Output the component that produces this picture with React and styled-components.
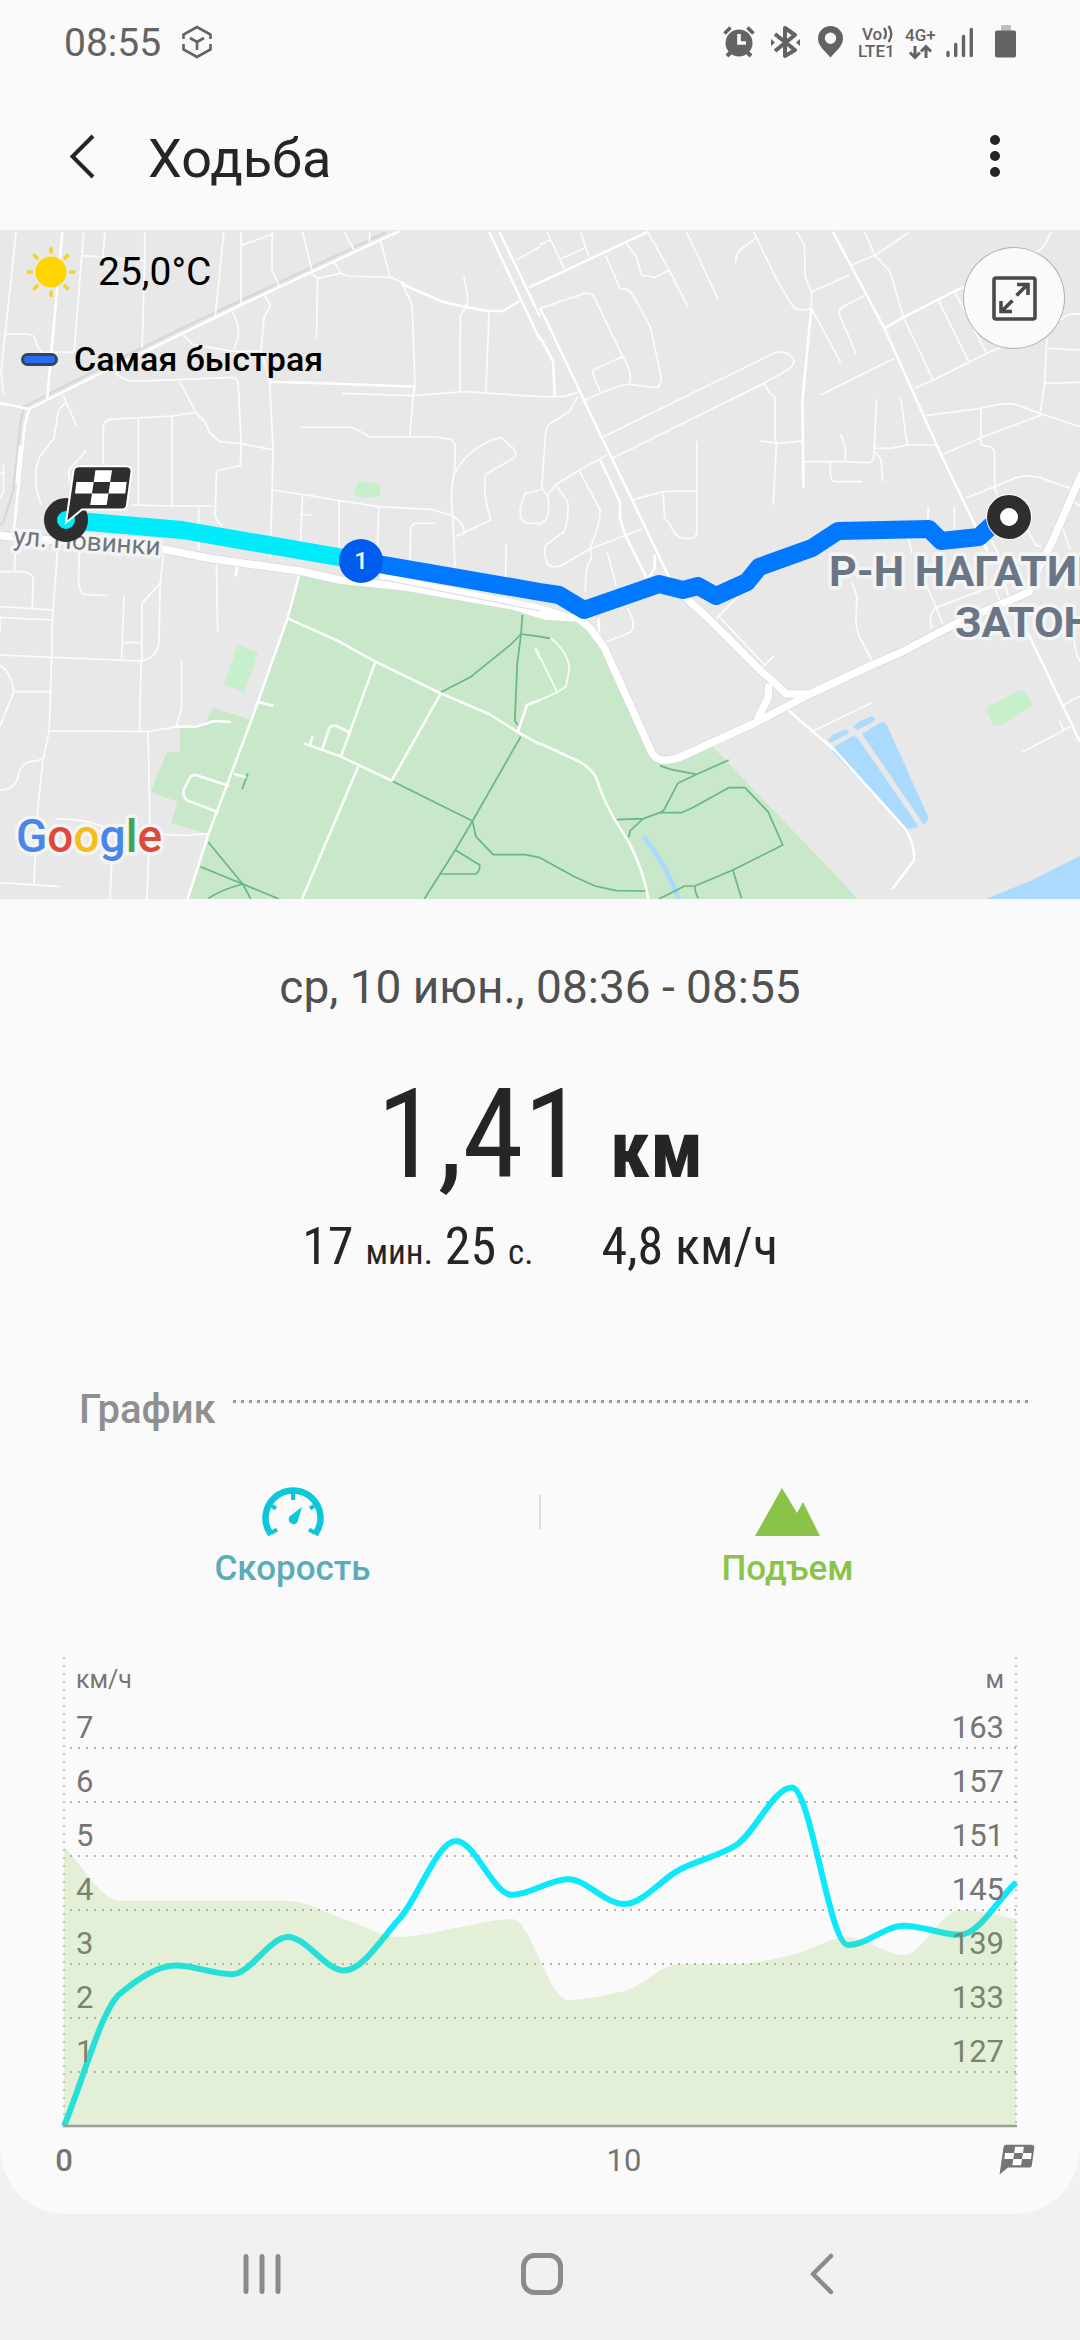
import React, { useState } from 'react';
import styled, { createGlobalStyle } from 'styled-components';

const GlobalStyle = createGlobalStyle`
    body {
        margin: 0;
        background-color: #f1f1f1;
        font-family: Roboto, "Noto Sans", sans-serif;
    }

    button {
        padding: 0;
        border: 0;
        background: none;
        font: inherit;
        color: inherit;
        cursor: pointer;
    }

    svg {
        display: block;
    }
`;

const Screen = styled.main`
    overflow: hidden;
    background-color: #fafafa;
    border-radius: 0 0 66px 66px;
`;

/* status bar */
const StatusBar = styled.div`
    display: flex;
    justify-content: space-between;
    align-items: center;
    height: 86px;
    padding: 0 64px;
    color: #636363;
`;

const StatusGroup = styled.div`
    display: flex;
    align-items: center;
    gap: ${props => props.$gap};
`;

const Clock = styled.time`
    font-size: 39px;
`;

/* title bar */
const StyledHeader = styled.header`
    display: flex;
    align-items: center;
    height: 144px;
    padding: 0 56px 0 50px;
    color: #252525;
`;

const IconButton = styled.button`
    display: flex;
    justify-content: center;
    align-items: center;
    width: 64px;
    height: 96px;
`;

const Title = styled.h1`
    flex: 1;
    margin: 0;
    padding-left: 34px;
    font-size: 54px;
    font-weight: 400;
`;

/* map */
const MapBox = styled.section`
    position: relative;
    overflow: hidden;
    height: 669px;
    background-color: #e8e8e8;
`;

const MapSvg = styled.svg`
    width: 100%;
    height: 100%;
`;

const MapInfo = styled.div`
    position: absolute;
    left: 21px;
    top: 12px;
    display: flex;
    flex-direction: column;
    gap: 37px;
    color: #000;
`;

const Weather = styled.div`
    display: flex;
    align-items: center;
    gap: 20px;
    padding-left: 3px;
    font-size: 39px;
    line-height: 60px;
`;

const Legend = styled.div`
    display: flex;
    align-items: center;
    gap: 16px;
    font-size: 34px;
    font-weight: 500;
    line-height: 40px;
`;

const LegendMark = styled.span`
    box-sizing: border-box;
    width: 37px;
    height: 13px;
    border: 3px solid #374459;
    border-radius: 7px;
    background-color: #2a6df5;
`;

const ExpandButton = styled.button`
    position: absolute;
    right: 16px;
    top: 18px;
    display: flex;
    justify-content: center;
    align-items: center;
    width: 100px;
    height: 100px;
    border-radius: 50%;
    background-color: #fafafa;
    box-shadow: 0 0 0 1px #b0b0b0;
`;

/* summary */
const Summary = styled.section`
    display: flex;
    flex-direction: column;
    align-items: center;
    padding-top: 60px;
    color: #252525;
`;

const DateText = styled.p`
    margin: 0;
    font-size: 46px;
    line-height: 56px;
    color: #505050;
`;

const Distance = styled.p`
    display: flex;
    align-items: baseline;
    gap: 25px;
    margin: 50px 0 0;
    font-family: "Roboto Condensed", Roboto, sans-serif;
    font-size: 124px;
    line-height: 140px;
`;

const DistanceUnit = styled.span`
    font-size: 80px;
    font-weight: 700;
    line-height: 1;
`;

const Metrics = styled.div`
    display: flex;
    gap: 68px;
    margin-top: 10px;
    font-family: "Roboto Condensed", Roboto, sans-serif;
    font-size: 52px;
    line-height: 64px;
`;

const SmallUnit = styled.small`
    font-size: 35px;
    line-height: 1;
`;

/* graph */
const GraphHeading = styled.div`
    display: flex;
    gap: 17px;
    margin-top: 107px;
    padding: 0 48px 0 79px;
`;

const GraphTitle = styled.h2`
    margin: 0;
    font-size: 40px;
    font-weight: 500;
    line-height: 48px;
    color: #8f8f8f;
`;

const DottedLine = styled.span`
    flex: 1;
    height: 3px;
    margin-top: 14px;
    background: repeating-linear-gradient(to right, #9a9a9a 0 3px, transparent 3px 8px);
`;

const Tabs = styled.div`
    display: flex;
    align-items: flex-start;
    margin-top: 53px;
    padding: 0 46px;
`;

const TabButton = styled.button`
    flex: 1;
    display: flex;
    flex-direction: column;
    align-items: center;
    gap: 12px;
    font-size: 35px;
    font-weight: 500;
    line-height: 40px;
    color: ${props => props.$color};
    opacity: ${props => (props.$on ? 1 : 0.4)};
`;

const TabDivider = styled.span`
    width: 2px;
    height: 34px;
    margin-top: 8px;
    background-color: #dedede;
`;

const ChartSvg = styled.svg`
    width: 100%;
    height: auto;
    margin: 61px 0 24px;
`;

/* system navigation */
const NavBar = styled.nav`
    display: grid;
    grid-template-columns: repeat(3, 26%);
    justify-content: center;
    height: 126px;
    padding: 0 0 0 4px;
    color: #8b8b8b;
`;

const NavButton = styled.button`
    display: flex;
    justify-content: center;
    align-items: center;
    height: 120px;
`;

const StatusIcons = () => (
    <StatusGroup $gap="8px">
        <svg width="40" height="36" viewBox="0 0 40 36" fill="currentColor">
            <circle cx="16" cy="18" r="13.5" />
            <path d="M1.5 8.5L7.500 2.500M30.500 8.500L24.500 2.500" stroke="currentColor" strokeWidth="3.600" />
            <path d="M4 31L8 27M28 31L24 27" stroke="currentColor" strokeWidth="4" />
            <path d="M16 9V18H23" stroke="#fafafa" strokeWidth="3.600" fill="none" />
        </svg>
        <svg width="39" height="36" viewBox="0 0 39 36" fill="none" stroke="currentColor" strokeWidth="4">
            <path d="M4 9L24 25L14 31V3L24 10L4 26" strokeLinejoin="round" />
            <path d="M0 14L4 17.500L0 21ZM29 14L25 17.500L29 21Z" fill="currentColor" stroke="none" />
        </svg>
        <svg width="32" height="36" viewBox="0 0 32 36" fill="currentColor">
            <path fillRule="evenodd" d="M12.500 1C5.500 1 0 6.500 0 13.500C0 21 7 26 12.500 32.500C18 26 25 21 25 13.500C25 6.500 19.500 1 12.500 1ZM12.500 7.500A5.700 5.700 0 1 1 12.500 18.900A5.700 5.700 0 1 1 12.500 7.500Z" />
        </svg>
        <svg width="39" height="36" viewBox="0 0 39 36" fill="currentColor" fontSize="17" fontWeight="500">
            <text x="4" y="15">Vo</text>
            <path d="M26 3Q30 8.500 26 14M30.500 1Q36 8.500 30.500 17" fill="none" stroke="currentColor" strokeWidth="2.400" />
            <text x="0" y="32">LTE1</text>
        </svg>
        <svg width="33" height="36" viewBox="0 0 33 36" fill="currentColor" fontSize="17" fontWeight="500">
            <text x="0" y="16">4G+</text>
            <path d="M10 21V32M5 27.500L10 32.500L15 27.500M21 33V22M16 26.500L21 21.500L26 26.500" fill="none" stroke="currentColor" strokeWidth="3" />
        </svg>
        <svg width="41" height="36" viewBox="0 0 41 36" stroke="currentColor" strokeWidth="3.400" strokeLinecap="round">
            <path d="M2 27.500V30.500M9.700 19.500V30.500M17.500 11.500V30.500M25.300 4.500V30.500" />
        </svg>
        <svg width="21" height="36" viewBox="0 0 21 36" fill="currentColor">
            <rect x="6" y="0" width="10" height="7" rx="1" opacity=".4" />
            <rect y="5.500" width="21" height="27" rx="2" />
        </svg>
    </StatusGroup>
);

// Each quarter of the map has its own grid of 1568 units across, 3 units to a pixel down
const TILE_NW = 'translate(0 -5) scale(.34439 .33333)';
const TILE_NE = 'translate(540 -5) scale(.34439 .33333)';
const TILE_SW = 'translate(0 330) scale(.34439 .33333)';
const TILE_SE = 'translate(540 330) scale(.34439 .33333)';

const STREETS = [
    [TILE_NW, `M47 20L3 440L10 505M15 327H80Q100 330 103 345Q110 378 125 382H215M243 20L215 382M240 92L420 107
        M305 20L298 95M420 20V100L413 370M650 20L625 275M700 20V240M700 62L795 25M790 20V135L810 182M878 20L907 140
        M1000 22L1028 75M1073 20V52M1105 50L1133 157M905 145L922 160L990 145L970 110
        M990 145L1010 153L1133 157L1165 170L1195 235L1198 270L1205 485L1200 510L1190 632M922 160L919 340
        M1347 155L1358 218L1355 245L1337 270L1335 500M1420 262L1411 500M1500 105L1568 65
        M768 210L785 243L767 275L758 375L783 470M675 262Q700 310 690 340L680 372M533 330L560 358L680 380L760 378
        M335 440Q345 460 380 468L440 467L675 457Q692 460 692 480L700 655L698 722L640 735Q628 737 628 750L625 870Q628 890 645 902
        M522 470L570 565L595 590L608 622L638 650L700 656L790 674M570 562L500 573L320 583Q300 588 300 606V715
        M402 578V840M500 573V842M380 840L500 843H620M577 843V975M783 470L793 670L790 800L785 1000
        M993 505L1198 512L1350 500L1568 515M872 607H1022L1075 636L1265 636L1310 643L1322 660L1320 740Q1305 800 1315 880L1322 1050
        M1455 637L1490 670Q1505 690 1490 700L1410 748Q1400 800 1425 885L1350 922L1322 935M1455 637Q1400 650 1360 690Q1330 720 1322 745
        M790 795L900 812L985 827L1100 845L1250 853L1315 872L1340 895L1350 922M878 812L872 970M872 868L905 870
        M985 827V970M1100 845L1095 990M1265 895H1205Q1192 900 1192 920L1190 1050M1470 955L1467 1130
        M1568 795L1525 805L1510 850L1512 880L1530 895H1568M183 510L222 602M190 533L170 555L157 640L115 695Q90 760 120 840
        M250 677L200 735V770M10 715V800L0 820M0 745H15M45 975L42 1040`],
    [TILE_NE, `M20 20L70 130M118 20L143 97M58 103L132 68M0 60L30 45
        M190 90L232 190Q260 190 270 210L320 305L352 455Q350 490 335 488L260 478Q240 475 130 525
        M0 250L130 205Q150 203 157 215L240 395Q270 440 260 478M240 395L158 433Q150 440 155 450L175 500
        M250 55L280 95L295 150L335 157L375 135M315 25L375 135L430 247M425 20L517 222
        M620 20L690 170L735 245Q750 262 788 250M625 42L580 75Q568 90 568 115M745 20L768 60L770 155L788 200V250
        M788 200L900 150M788 250L873 412M940 212L875 248Q865 258 870 270L918 387M815 510L1030 400
        M900 122L975 90L1070 22M942 20L972 90L1017 140L1055 277L1142 465M1155 222L1245 410M1203 198L1297 385
        M1088 490L1142 465L1297 385L1335 368M1485 20Q1460 80 1440 80M1510 285Q1540 260 1568 268
        M1472 340L1465 475L1453 560M1475 370L1568 375M1465 475L1568 472
        M1120 572L1280 550Q1350 530 1380 538L1460 568L1568 605M1460 568L1280 638L1165 690
        M1280 550V655Q1283 665 1300 663Q1318 670 1320 680V790L1330 810M1235 820L1320 785L1385 757Q1410 750 1450 757L1540 790
        M178 638L685 382Q715 375 735 400Q745 420 710 440L650 475L210 700
        M650 475L668 505L682 515V635L687 655L677 840M640 648L687 655L762 648M765 710H880L955 713Q968 710 970 690L977 522
        M873 627L887 668V710M970 670L1020 670L1068 660L1150 660M1048 520L1062 630L1068 660M975 680L990 705L995 770
        M843 713V750Q845 770 860 770H935M455 648V920Q455 940 435 940H415Q395 935 385 915Q375 890 362 880L358 800L455 797
        M358 800L262 827M0 515L70 515L110 502M110 515L85 560L30 595Q15 610 15 640L5 790L20 810
        M195 690L115 735L45 780L22 810Q30 850 20 880L0 900
        M50 785L80 830Q85 880 70 920L15 962Q10 1000 25 1020Q40 1030 60 1022L145 972L295 912
        M115 740L175 855Q175 900 145 970L150 1000Q130 1020 132 1100M195 980L222 1085
        M1127 845V885M1203 845V910M1070 940L1080 985M1415 915L1440 960L1455 965M1545 825L1568 845M1518 910L1540 975M1310 945L1330 985`],
    [TILE_SW, `M0 35H70Q95 40 97 60L93 147M0 140L155 150M0 172L155 180M0 172V215M0 285L150 292L410 303
        M168 -40L152 180L150 292L143 512L125 598L110 740L98 975M0 968L175 980M0 315Q35 340 40 395L0 500M40 395H148
        M143 512L430 515L512 500L527 445V302M125 598L80 607Q55 620 50 660Q35 690 0 690
        M230 -30L228 70Q232 100 247 103L312 107M360 108L353 298M353 248H412M475 -20L465 70L412 130V303
        M412 303Q460 290 462 240L465 70M410 303L405 515M430 515L435 780L427 1017M628 -10L632 215
        M325 880L320 1017M160 777Q240 775 300 800M470 823L545 826L605 821`],
    [TILE_SE, `M255 145L270 180V205L262 217L190 247M575 110L500 188M520 170L650 312M680 287L640 328
        M785 515L795 512L963 428M905 65L920 110L917 190L925 225L963 300M1145 145L1310 80M1170 190L1120 70
        M1145 145Q1125 180 1140 205M1520 435L1568 408M1400 577L1540 500M1508 483L1522 512M1550 220Q1550 270 1568 305
        M1340 30L1360 110M1310 60L1335 120M0 290L50 397M30 233Q85 280 85 330L75 380L50 397L0 420`],
];

const AVENUES = [
    [TILE_NW, `M1165 170L1180 183L1290 232L1350 245L1415 258L1460 258L1508 228M1535 187L1568 172
        M783 470L940 475L1205 485M181 20L137 520M58 660L48 775M0 535Q40 540 80 552M1420 20L1568 345M1450 20L1568 275
        M1160 18L700 240L410 385L220 482L85 552L72 600L40 920`],
    [TILE_NE, `M315 20L0 172M0 250L20 290L180 640L270 830L385 1080M0 335L38 410L43 515M850 20L1000 310L1165 690L1300 980
        M788 250L762 525L765 788M1000 310L1055 277L1205 198L1240 182M175 705L232 830V880L250 935L310 1060M333 990V1030L315 1060`],
    [TILE_SW, `M870 40L835 175L730 480L605 823L545 1017M665 678L568 645Q555 645 550 655L533 690Q530 710 545 722L635 757
        M752 427L795 437M680 642L715 652M835 175L980 242L1090 305L1280 400L1420 462L1505 517L1568 553M1090 305L990 590
        M883 550L990 590L1137 662L1280 400M900 555L908 528M935 570L957 503Q965 495 975 497L1015 517M1040 620L877 1017
        M1503 517L1530 435L1568 420M1555 265L1568 295M512 500H570L622 483L670 486M690 5L685 50`],
    [TILE_SE, `M0 550L100 598Q140 615 162 650Q180 710 212 770L260 850Q300 930 315 1017M170 175L172 230
        M720 450L855 570L1060 805Q1088 850 1087 900L1023 987M1410 205L1568 545`],
];

const FOOTPATHS = [
    [TILE_SW, `M1517 165L1513 222L1568 230M1513 222L1485 252L1365 352L1280 397M1513 222L1502 310L1495 482L1503 495
        M1512 530L1372 783L1137 662M1372 783L1322 870L1232 1017M1372 783L1382 830L1432 884H1525L1568 893
        M1322 870L1393 915Q1395 930 1382 942H1278M605 847L705 972L582 920M705 972L810 1017M605 1015Q640 990 705 972L728 1017
        M720 640L703 688`],
    [TILE_SE, `M0 230L30 235M348 617L380 628L455 643L400 670L360 750L348 758M455 643L548 600
        M222 779L300 776L348 758H410L440 745L548 683H595L662 755L705 855L560 930L450 978H420L345 1017
        M300 776L262 812L257 832M560 930L585 1015M450 978Q450 1000 460 1015M0 893L100 950L160 978L222 992L310 993`],
];

const HIGHWAY = `M-5 305L13 307L162 319L213 329L300 341L340 350L406 357L513 376L545 386L578 388L590 398L604 417L652 523
    Q656 529 662 530Q668 531 678 528L755 493L812 463L872 435L902 422L953 395L1029 362L1039 337L1053 310L1082 243`;
const JUNCTION = 'M684 366L712 392L760 440L777 455L786 464H812M769 454L768 468L757 490';

const Roads = ({ tiles, color, width }) => (
    <g fill="none" stroke={color} strokeWidth={width} strokeLinejoin="round">
        {tiles.map(([tile, d]) => (
            <g key={tile} transform={tile}>
                <path d={d} vectorEffect="non-scaling-stroke" />
            </g>
        ))}
    </g>
);

/* 체크무늬 깃발: 지도와 그래프에서 같이 사용 */
const FinishFlag = ({ color, outline }) => (
    <g>
        <path
            d="M14 1.300H61Q67 1.300 66.500 7L62 40Q61.500 44.500 56 44.500H17L1 57.700L8.500 6Q9 1.300 14 1.300Z"
            fill={color}
            stroke={outline}
            strokeWidth="2"
        />
        <path
            d="M30.400 5.300H47L45.200 17H28.700ZM11.400 17H28.700L27 28.500H10ZM45.200 17H61.700L60.300 28.500H43.500ZM27 28.500H43.500L41.700 40H25.200Z"
            fill="#fff"
        />
    </g>
);

const RouteMap = () => (
    <MapSvg viewBox="0 0 1080 669" preserveAspectRatio="xMidYMid slice" role="img" aria-label="Маршрут">
        <path d="M300 343L288 388L251 490L208 604L188 669H857L846 656L712 516L678 528L652 523L604 417L578 388L513 376Z" fill="#c8e8c9" />
        <g transform={TILE_SW}>
            <path d="M620 443L730 480L605 823L497 790L515 725L437 697L485 575H522V500L590 497Z" fill="#c8e8c9" />
            <path d="M690 255L750 277L710 395L650 375Z" fill="#c8efcb" />
        </g>
        <g transform={TILE_NW}>
            <path d="M1040 768L1103 778V815L1060 820Q1028 815 1028 800Z" fill="#c8efcb" />
        </g>
        <g transform={TILE_SE} fill="#abdaff">
            <path d="M1300 440L1390 393Q1408 390 1412 400L1430 435L1340 495Q1320 500 1313 488L1297 455Z" fill="#c8efcb" />
            <path d="M848 565L905 530Q920 525 930 545L1100 800L1070 808Q1060 805 1050 790L850 575Z" />
            <path d="M935 522L990 487Q1000 483 1008 497L1127 770Q1125 790 1113 792Z" />
            <path d="M835 540L850 525L890 507L897 520L845 547ZM910 500L925 485L965 468L972 478L965 487L920 510Z" />
            <path d="M1292 1018L1430 960L1568 888V1018Z" />
            <path d="M300 827Q370 920 403 1017" fill="none" stroke="#abdaff" strokeWidth="14" />
        </g>
        <g transform={TILE_NW}>
            <path d="M1120 22L600 275L300 425L70 545L60 590L38 800L10 890L0 900" fill="none" stroke="#d6d7d9" strokeWidth="7" />
        </g>
        <Roads tiles={FOOTPATHS} color="#6ab686" width="1.700" />
        <Roads tiles={STREETS} color="#fcfcfc" width="1.700" />
        <Roads tiles={AVENUES} color="#fff" width="2.500" />
        <g fill="none" strokeLinejoin="round">
            <path d={HIGHWAY + JUNCTION} stroke="#d8d9da" strokeWidth="9" />
            <path d={HIGHWAY + JUNCTION} stroke="#fff" strokeWidth="7.500" />
            <path d="M380 346L540 378L572 388" stroke="#fff" strokeWidth="6" />
            <path d="M385 350L540 381" stroke="#d8d9da" strokeWidth="1" />
        </g>

        <g fill="none" strokeWidth="18" strokeLinejoin="round">
            <path d="M66 290L182 300L361 331" stroke="#00ecfb" />
            <path
                d="M361 331L540 362L559 365L584 380L659 354L683 360L698 356L716 366L747 352L759 337L812 318L838 301L929 299L941 311L979 307L991 296L1009 284"
                stroke="#0078ff"
            />
        </g>

        <g stroke="#f4f4f4" strokeWidth="7" strokeLinejoin="round" paintOrder="stroke">
            <text x="13" y="315" transform="rotate(4 13 315)" fontSize="26" fill="#70757d">ул. Новинки</text>
            <g fill="#6a7686" fontSize="43" fontWeight="700">
                <text x="829" y="356">Р-Н НАГАТИН</text>
                <text x="955" y="407">ЗАТОН</text>
            </g>
            <text x="16" y="622" fontSize="46" fontWeight="500">
                <tspan fill="#4a86e8">G</tspan>
                <tspan fill="#dc4a3d">o</tspan>
                <tspan fill="#f4bd1a">o</tspan>
                <tspan fill="#4a86e8">g</tspan>
                <tspan fill="#3fa757">l</tspan>
                <tspan fill="#dc4a3d">e</tspan>
            </text>
        </g>

        <circle cx="66" cy="290" r="15.500" fill="#00ecfb" stroke="#2e2e2e" strokeWidth="13" />
        <g transform="translate(65 235)">
            <FinishFlag color="#2e2e2e" outline="#fff" />
        </g>
        <circle cx="1009" cy="287" r="23" fill="#fff" />
        <circle cx="1009" cy="287" r="15.500" fill="#fff" stroke="#2e2e2e" strokeWidth="13" />
        <circle cx="361" cy="331" r="22" fill="#005ced" />
        <text x="361" y="339" fontSize="24" fontWeight="500" fill="#fff" textAnchor="middle">1</text>
    </MapSvg>
);

const SPEED = [0, 2.45, 2.97, 2.81, 3.5, 2.88, 3.85, 5.28, 4.28, 4.57, 4.11, 4.75, 5.2, 6.27, 3.35, 3.71, 3.54, 4.51];
const ELEVATION = [152, 146, 146, 146, 146, 144, 142, 143, 144, 135, 136, 139, 139, 140, 142, 140, 145, 144];

const LEFT = 64;
const RIGHT = 1016;
const BOTTOM = 476;
const ROW = 54;

const toPoints = (values) =>
    values.map((v, i) => [LEFT + i * 56, BOTTOM - v * ROW]);

/* monotone cubic, so the curve never passes above a peak */
const smoothPath = (points) => {
    const slope = (i) => (points[i + 1][1] - points[i][1]) / (points[i + 1][0] - points[i][0]);
    const tangents = points.map((p, i) => {
        if (i === 0) return slope(0);
        if (i === points.length - 1) return slope(i - 1);
        const a = slope(i - 1);
        const b = slope(i);
        return a * b <= 0 ? 0 : (2 * a * b) / (a + b);
    });

    return points.slice(1).reduce((d, [x, y], i) => {
        const [px, py] = points[i];
        const dx = (x - px) / 3;
        return `${d}C${px + dx} ${py + tangents[i] * dx} ${x - dx} ${y - tangents[i + 1] * dx} ${x} ${y}`;
    }, `M${points[0][0]} ${points[0][1]}`);
};

const Chart = ({ showSpeed, showElevation }) => {
    const speedPath = smoothPath(toPoints(SPEED));
    const elevationPath = smoothPath(toPoints(ELEVATION.map((m) => (m - 121) / 6)));

    return (
        <ChartSvg viewBox="0 0 1080 540" role="img" aria-label="График">
            <g stroke="#b4b4b4" strokeWidth="2" strokeDasharray="2 6">
                {[1, 2, 3, 4, 5, 6, 7].map((n) => (
                    <path key={n} d={`M${LEFT + 6} ${BOTTOM - n * ROW}H${RIGHT}`} />
                ))}
                <path d={`M${LEFT} 7V${BOTTOM}M${RIGHT} 7V${BOTTOM}`} strokeWidth="1.500" />
            </g>
            {showSpeed && <path d={speedPath} fill="none" stroke="#0de8fa" strokeWidth="6" />}
            <path d={`M${LEFT - 1} ${BOTTOM}H${RIGHT + 1}`} stroke="#9c9c9c" strokeWidth="2.500" />
            <g fontSize="31" fill="#757575">
                <text x="76" y="38" fontSize="25">км/ч</text>
                <text x="1004" y="38" fontSize="25" textAnchor="end">м</text>
                {[1, 2, 3, 4, 5, 6, 7].map((n) => (
                    <g key={n}>
                        <text x="76" y={BOTTOM - n * ROW - 10}>{n}</text>
                        <text x="1004" y={BOTTOM - n * ROW - 10} textAnchor="end">{121 + n * 6}</text>
                    </g>
                ))}
                <text x="64" y="521" fontWeight="500" textAnchor="middle">0</text>
                <text x="624" y="521" textAnchor="middle">10</text>
            </g>
            {showElevation && (
                <path d={`${elevationPath}V${BOTTOM}H${LEFT}Z`} fill="#8bc34a" fillOpacity=".2" />
            )}
            <g transform="translate(999 494) scale(.53)">
                <FinishFlag color="#757575" outline="none" />
            </g>
        </ChartSvg>
    );
};

const App = () => {
    const [showSpeed, setShowSpeed] = useState(true);
    const [showElevation, setShowElevation] = useState(true);

    return (
        <>
            <GlobalStyle />
            <Screen>
                <StatusBar>
                    <StatusGroup $gap="21px">
                        <Clock>08:55</Clock>
                        <svg width="30" height="36" viewBox="0 0 30 36" fill="none" stroke="currentColor" strokeWidth="2.600">
                            <path d="M1.500 14V9.500L15 2L28.500 9.500V14M28.500 19V24.500L15 32L1.500 24.500V19" />
                            <path d="M8 13L15 17L22 13M15 17V25" />
                        </svg>
                    </StatusGroup>
                    <StatusIcons />
                </StatusBar>

                <StyledHeader>
                    <IconButton aria-label="Назад">
                        <svg width="28" height="48" viewBox="0 0 28 48" fill="none" stroke="currentColor" strokeWidth="4">
                            <path d="M25 2L4.500 22.500L25 43" />
                        </svg>
                    </IconButton>
                    <Title>Ходьба</Title>
                    <IconButton aria-label="Меню">
                        <svg width="18" height="48" viewBox="0 0 18 48" fill="currentColor">
                            <circle cx="12" cy="6" r="5" />
                            <circle cx="12" cy="22" r="5" />
                            <circle cx="12" cy="38" r="5" />
                        </svg>
                    </IconButton>
                </StyledHeader>

                <MapBox>
                    <RouteMap />
                    <MapInfo>
                        <Weather>
                            <svg width="54" height="54" viewBox="0 0 54 54" stroke="#f3d22b" strokeWidth="3.600" strokeLinecap="round">
                                <path d="M27 3.500V7M27 47V50.500M4 27H7.500M46.500 27H50M10.500 10.500L13 13M41 41L43.500 43.500M43.500 10.500L41 13M13 41L10.500 43.500" />
                                <circle cx="27" cy="27" r="15.500" fill="#ffd400" stroke="none" />
                            </svg>
                            25,0°C
                        </Weather>
                        <Legend>
                            <LegendMark />
                            Самая быстрая
                        </Legend>
                    </MapInfo>
                    <ExpandButton aria-label="Развернуть карту">
                        <svg width="46" height="46" viewBox="0 0 46 46" fill="none" stroke="#4a4a4a" strokeWidth="3.600">
                            <rect x="3" y="3" width="41" height="41" rx="2" />
                            <path d="M25.500 20.500L36 10M26 9.500H37V20M21.500 25.500L11 36M21 36.500H10V26" />
                        </svg>
                    </ExpandButton>
                </MapBox>

                <Summary>
                    <DateText>ср, 10 июн., 08:36 - 08:55</DateText>
                    <Distance>
                        <span>1,41</span>
                        <DistanceUnit>км</DistanceUnit>
                    </Distance>
                    <Metrics>
                        <span>17 <SmallUnit>мин.</SmallUnit> 25 <SmallUnit>с.</SmallUnit></span>
                        <span>4,8 км/ч</span>
                    </Metrics>
                </Summary>

                <GraphHeading>
                    <GraphTitle>График</GraphTitle>
                    <DottedLine />
                </GraphHeading>

                <Tabs>
                    <TabButton $color="#5aacb9" $on={showSpeed} aria-pressed={showSpeed} onClick={() => setShowSpeed(!showSpeed)}>
                        <svg width="62" height="50" viewBox="0 0 62 50" fill="none" stroke="#0cc6da">
                            <path d="M9 47.500A27.500 27.500 0 1 1 53 47.500" strokeWidth="6.500" />
                            <path d="M31 6V13M10 19L14 21.500M52 19L48 21.500M9 46L15 42.500M53 46L47 42.500" strokeWidth="4" />
                            <path d="M40 20L35.500 35Q33 39 28.500 36Q25.500 33 27.500 29.500Z" fill="#0cc6da" stroke="none" />
                        </svg>
                        Скорость
                    </TabButton>
                    <TabDivider />
                    <TabButton $color="#8bc34a" $on={showElevation} aria-pressed={showElevation} onClick={() => setShowElevation(!showElevation)}>
                        <svg width="65" height="50" viewBox="0 0 65 50" fill="currentColor">
                            <path d="M0 49L27 1L42 26L48 15L65 49Z" />
                        </svg>
                        Подъем
                    </TabButton>
                </Tabs>

                <Chart showSpeed={showSpeed} showElevation={showElevation} />
            </Screen>

            <NavBar>
                <NavButton aria-label="Недавние">
                    <svg width="38" height="42" viewBox="0 0 38 42" stroke="currentColor" strokeWidth="5" strokeLinecap="round">
                        <path d="M3 3.500V38.500M19 3.500V38.500M35 3.500V38.500" />
                    </svg>
                </NavButton>
                <NavButton aria-label="Главный экран">
                    <svg width="42" height="42" viewBox="0 0 42 42" fill="none" stroke="currentColor" strokeWidth="5">
                        <rect x="2.500" y="2.500" width="37" height="37" rx="11" />
                    </svg>
                </NavButton>
                <NavButton aria-label="Назад">
                    <svg width="24" height="42" viewBox="0 0 24 42" fill="none" stroke="currentColor" strokeWidth="4.500" strokeLinecap="round" strokeLinejoin="round">
                        <path d="M21 3L3 21L21 39" />
                    </svg>
                </NavButton>
            </NavBar>
        </>
    );
};

export default App;
